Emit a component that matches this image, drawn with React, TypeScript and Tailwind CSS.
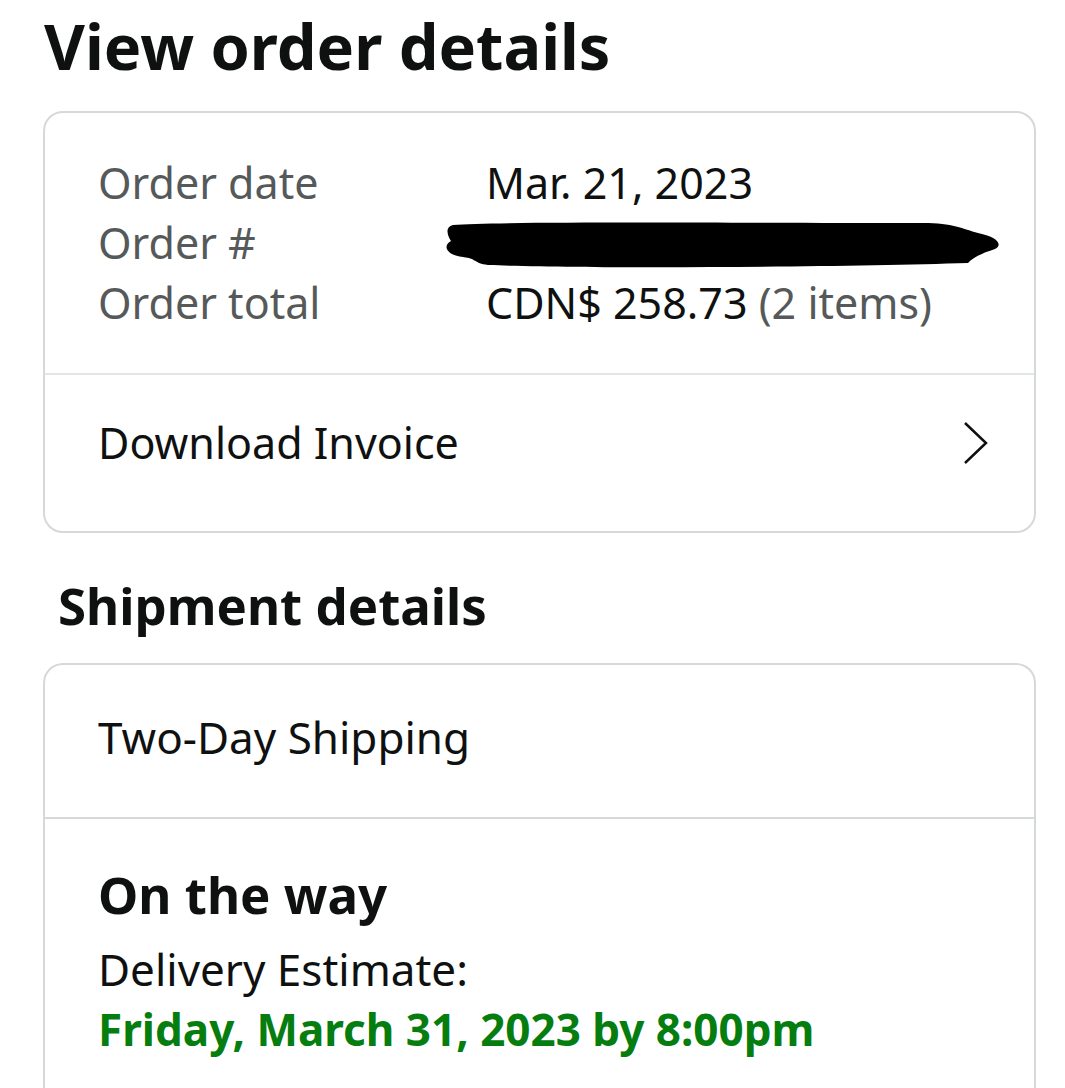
import React from 'react';

const font = { fontFamily: '"Noto Sans", "Open Sans", sans-serif' };

const InfoRow: React.FC<{ label: string; children: React.ReactNode }> = ({ label, children }) => (
  <div className="flex h-[60px] items-center">
    <div className="w-[388px] text-[#565959]">{label}</div>
    <div className="flex-1 text-[#0f1111]">{children}</div>
  </div>
);

const Redacted = () => (
  <svg width="560" height="52" viewBox="0 0 560 52" className="ml-[-43px]">
    <path
      d="M10 8 C60 4 300 6 480 6 C510 6 520 12 535 16 C555 20 560 28 552 32 C540 36 530 40 525 46 C400 50 150 52 45 48 C30 46 35 42 20 40 C2 38 0 28 8 24 C4 18 2 10 10 8 Z"
      fill="#000"
    />
  </svg>
);

export default function App() {
  return (
    <div className="w-[1065px] h-[1088px] overflow-hidden bg-white" style={font}>
      <h1 className="pl-[44px] pt-[6px] text-[63px] leading-[80px] font-bold text-[#0f1111]">View order details</h1>

      <div className="ml-[43px] mr-[29px] mt-[25px] rounded-[20px] border-2 border-[#d5d9d9] text-[43px]">
        <div className="pl-[53px] pr-[30px] pt-[40px] pb-[40px]">
          <InfoRow label="Order date">Mar. 21, 2023</InfoRow>
          <InfoRow label="Order #">
            <Redacted />
          </InfoRow>
          <InfoRow label="Order total">
            CDN$ 258.73 <span className="text-[#565959]">(2 items)</span>
          </InfoRow>
        </div>
        <div className="border-t-2 border-[#e3e6e6] flex items-center justify-between pl-[53px] pr-[44px] pt-[38px] pb-[58px]">
          <span className="leading-[60px] text-[#0f1111]">Download Invoice</span>
          <svg width="28" height="44" viewBox="0 0 28 44" fill="none">
            <path d="M3 2 L24 22 L3 42" stroke="#0f1111" strokeWidth="2.5" />
          </svg>
        </div>
      </div>

      <h2 className="pl-[58px] mt-[37px] text-[51px] leading-[70px] font-bold text-[#0f1111]">Shipment details</h2>

      <div className="ml-[43px] mr-[29px] mt-[23px] rounded-t-[20px] border-2 border-b-0 border-[#d5d9d9] text-[44px] text-[#0f1111]">
        <div className="pl-[53px] pt-[42px] pb-[50px] leading-[60px]">Two-Day Shipping</div>
        <div className="border-t-2 border-[#d5d9d9] pl-[53px] pt-[40px] pb-[40px]">
          <div className="text-[51px] leading-[70px] font-bold">On the way</div>
          <div className="leading-[60px] mt-[10px]">Delivery Estimate:</div>
          <div className="leading-[60px] font-bold text-[#067d0f]">Friday, March 31, 2023 by 8:00pm</div>
        </div>
      </div>
    </div>
  );
}
